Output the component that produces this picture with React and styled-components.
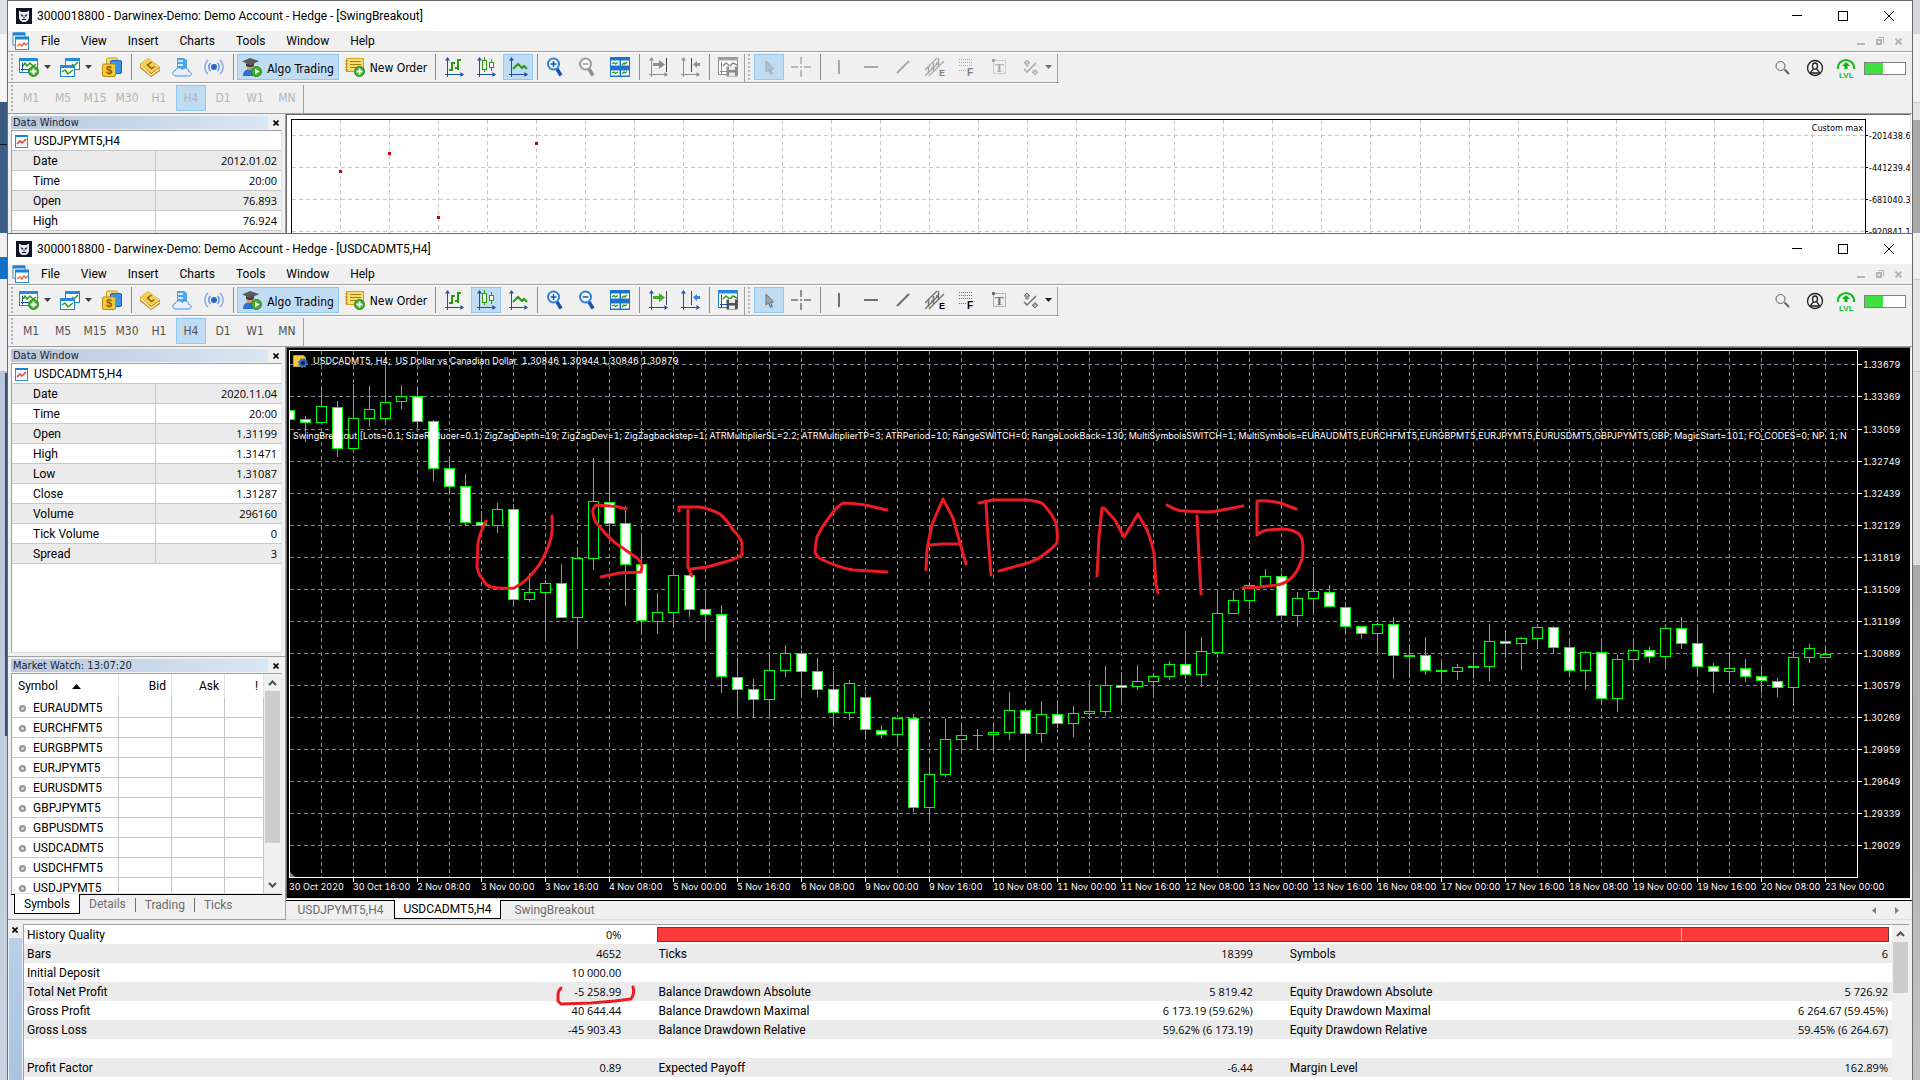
import React from 'react';
import styled, { createGlobalStyle, css } from 'styled-components';

const GlobalStyle = createGlobalStyle`
  * {
    box-sizing: border-box;
  }

  body {
    margin: 0;
    background: #f0f0f0;
    color: #000;
    font: 12px Roboto, sans-serif;
  }

  button {
    border: 0;
    padding: 0;
    background: none;
    color: inherit;
    font: inherit;
  }

  svg {
    display: block;
  }
`;

const LINE = '#a0a0a0';
const CELL_LINE = '#c8c8c8';
const TAHOMA = "'DejaVu Sans Condensed', sans-serif";
const NUMBERS = "'Open Sans', sans-serif";

/* ---------- desktop ---------- */

const Desktop = styled.div`
  display: flex;
  height: 100vh;
  overflow: hidden;
`;

const LeftEdge = styled.div`
  flex: none;
  width: 7px;
  background: linear-gradient(90deg, transparent 5px, #34506e 5px) 0 373px / 7px
      363px no-repeat,
    linear-gradient(
      #dfe3e6 34px,
      #f4f4f4 34px 102px,
      #3a597e 102px 144px,
      #10182a 144px 145px,
      #3d5f87 145px 233px,
      #f0f0f0 233px 257px,
      #1271c4 257px 279px,
      #ececee 279px 371px,
      #b9c5da 371px,
      #c9d3e0
    );
`;

const RightEdge = styled.div`
  flex: none;
  width: 7px;
  background: linear-gradient(
    #d4d8dc 34px,
    #f2f2f2 34px 102px,
    #c4c4c4 102px 103px,
    #e4e4e4 103px 120px,
    #a8a8a8 120px 233px,
    #f0f0f0 233px 279px,
    #cdcdcd 279px 280px,
    #e6e6e8 280px 371px,
    #c8c8c8 371px 372px,
    #dedede 372px 565px,
    #a9a9a9 565px,
    #c2c2c2
  );
`;

const Windows = styled.div`
  display: flex;
  flex: 1;
  flex-direction: column;
  min-width: 0;
`;

const Frame = styled.section`
  display: flex;
  flex: ${({ $back }) => ($back ? '0 0 233px' : '1')};
  flex-direction: column;
  min-height: 0;
  overflow: hidden;
  border: 1px solid #6b6b6b;
  border-bottom: 0;
  background: #f0f0f0;
`;

/* ---------- title and menu ---------- */

const TitleBar = styled.header`
  display: flex;
  flex: none;
  align-items: center;
  height: 30px;
  padding-left: 8px;
  gap: 5px;
  background: #fff;

  h1 {
    flex: 1;
    margin: 0;
    font: inherit;
  }
`;

const CaptionButtons = styled.div`
  display: flex;
`;

const CaptionButton = styled.button`
  display: grid;
  place-items: center;
  width: 46px;
  height: 30px;
`;

const MenuBar = styled.nav`
  display: flex;
  flex: none;
  align-items: center;
  height: 21px;
  padding: 0 4px;
  border-bottom: 1px solid ${LINE};

  a {
    padding: 0 10px 0 11px;
    color: inherit;
    text-decoration: none;
  }
`;

const ChildControls = styled.div`
  display: flex;
  margin-left: auto;

  button {
    display: grid;
    place-items: center;
    width: 19px;
    height: 16px;
  }
`;

/* ---------- toolbars ---------- */

const ToolRow = styled.div`
  display: flex;
  flex: none;
  justify-content: space-between;
  height: 31px;
  border-top: 1px solid #fff;
`;

const ToolBar = styled.div`
  display: flex;
  align-items: flex-start;
  height: 30px;
  padding: 1px 0 0 3px;
  border-bottom: 1px solid ${LINE};
  box-shadow: 0 1px #fff;
`;

const Grip = styled.span`
  width: 2px;
  height: 26px;
  margin-right: ${({ $gap }) => $gap || 1}px;
  background: repeating-linear-gradient(#b4b4b4 0 2px, transparent 2px 4px);
`;

const Divider = styled.span`
  width: 1px;
  height: 26px;
  margin: 0 2px 0 3px;
  background: #8c8c8c;
`;

const BarEnd = styled.span`
  width: 1px;
  height: 28px;
  margin-right: ${({ $gap }) => $gap || 0}px;
  background: ${LINE};
`;

const pressed = css`
  border: 1px solid #90c8f6;
  background: #c0dcf3;
`;

const ToolButton = styled.button`
  display: flex;
  align-items: center;
  justify-content: center;
  width: ${({ $width }) => $width || 30}px;
  height: 26px;
  margin: 0 1px;
  gap: 5px;
  font: 12px ${TAHOMA};
  white-space: nowrap;
  ${({ $pressed }) => $pressed && pressed}
`;

const ToolLabel = styled.span`
  padding-top: ${({ $low }) => ($low ? 3 : 1)}px;
`;

const Periods = styled.div`
  display: flex;
  flex: none;
  height: 31px;
  padding: 2px 0 0 3px;
  border-bottom: 1px solid ${LINE};
  color: ${({ $dim }) => ($dim ? '#b4b4b4' : '#505050')};
`;

const Tray = styled.div`
  display: flex;
  align-items: center;
  gap: 12px;
  padding: 0 6px 0 0;

  svg:first-child {
    margin-right: 3px;
  }
`;

const Battery = styled.div`
  width: 42px;
  height: 13px;
  margin-left: -4px;
  border: 1px solid #808080;
  background: linear-gradient(90deg, #40e040 18px, #fff 18px);
`;

/* ---------- panes ---------- */

const Workspace = styled.main`
  display: flex;
  flex: ${({ $covered }) => ($covered ? '0 0 573px' : '1')};
  min-height: 0;
`;

const SideColumn = styled.aside`
  display: flex;
  flex: none;
  flex-direction: column;
  width: 277px;
  border-bottom: 1px solid ${LINE};
`;

const Pane = styled.section`
  display: flex;
  flex: ${({ $height }) => ($height ? `0 0 ${$height}px` : '1')};
  flex-direction: column;
  min-height: 0;
  padding: 2px 3px 0;
  border-top: ${({ $height }) => ($height ? `1px solid ${LINE}` : 0)};
`;

const PaneHeader = styled.div`
  display: flex;
  flex: none;
  height: 13px;
  margin-bottom: 1px;
  font: 11px/13px ${TAHOMA};
  color: #1c1c2c;

  h2 {
    flex: 1;
    margin: 0;
    padding-left: 2px;
    background: linear-gradient(90deg, #b8c8db, #d9e6f4);
    font: inherit;
  }

  button {
    display: grid;
    place-items: center;
    width: 14px;
    padding-left: 2px;
  }
`;

const ListBox = styled.div`
  display: flex;
  flex: 1;
  min-height: 0;
  margin-bottom: ${({ $gap }) => $gap || 0}px;
  overflow: hidden;
  border: 1px solid #e3e3e3;
  border-top-color: ${LINE};
  border-left-color: ${LINE};
  background: #fff;
`;

const DataTable = styled.table`
  width: 100%;
  height: fit-content;
  border-spacing: 0;
  table-layout: fixed;

  caption {
    height: 19px;
    padding-left: 3px;
    line-height: 20px;
    text-align: left;
  }

  caption > span {
    display: flex;
    align-items: center;
    height: 19px;
    gap: 5px;
  }

  th,
  td {
    height: 20px;
    padding: 2px 4px 0 21px;
    border-top: 1px solid ${CELL_LINE};
    font-weight: 400;
    line-height: 17px;
    text-align: left;
  }

  th {
    width: 143px;
  }

  td {
    padding: 0 4px 0 0;
    border-left: 1px solid ${CELL_LINE};
    font: 11px/19px ${NUMBERS};
    text-align: right;
  }

  tr:nth-child(odd) {
    background: #ebebeb;
  }

  tr:last-child > * {
    border-bottom: 1px solid ${CELL_LINE};
  }
`;

const SymbolTable = styled.table`
  flex: 1;
  height: fit-content;
  border-spacing: 0;
  table-layout: fixed;

  th,
  td {
    height: 20px;
    padding: 2px 5px 0 6px;
    border-right: 1px solid ${CELL_LINE};
    border-bottom: 1px solid ${CELL_LINE};
    font-weight: 400;
    line-height: 17px;
    text-align: right;
  }

  thead th {
    height: 24px;
    padding-top: 0;
    border-bottom: 0;
    border-right-color: #e3e3e3;
  }

  th:first-child {
    text-align: left;
  }
`;

const SymbolCell = styled.span`
  display: flex;
  align-items: center;
  gap: ${({ $gap }) => $gap}px;
`;

const Bullet = styled.i`
  width: 7px;
  height: 7px;
  margin-left: 1px;
  border: 2px solid #959595;
  border-radius: 50%;
  background: #ddd;
`;

const ScrollTrack = styled.div`
  display: flex;
  flex: none;
  flex-direction: column;
  align-items: center;
  width: 17px;
  background: #f0f0f0;

  button {
    display: grid;
    place-items: center;
    width: 100%;
    height: 17px;
  }
`;

const Thumb = styled.div`
  width: 15px;
  height: ${({ $size }) => $size}px;
  margin-bottom: auto;
  background: #cdcdcd;
`;

const PaneTabs = styled.div`
  display: flex;
  flex: none;
  align-items: flex-start;
  height: 25px;
  padding-left: 3px;
  background: linear-gradient(#000 1px, transparent 1px);
`;

const PaneTab = styled.button`
  height: 18px;
  margin-top: 1px;
  padding: 0 9px;
  color: #6d6d6d;

  & + & + & {
    border-left: 1px solid #6d6d6d;
    height: 14px;
    margin-top: 4px;
    line-height: 12px;
  }

  ${({ $active }) =>
    $active &&
    css`
      height: 20px;
      margin-top: 0;
      border: 1px solid #000;
      border-top: 0;
      background: #fff;
      color: #000;
    `}
`;

/* ---------- chart area ---------- */

const ChartColumn = styled.div`
  display: flex;
  flex: 1;
  flex-direction: column;
  min-width: 0;
  border-left: 1px solid ${LINE};
  background: #fff;
`;

const ChartFrame = styled.div`
  flex: 1;
  min-height: 0;
  margin: 0 1px 1px 0;
  overflow: hidden;
  border: 1px solid #e3e3e3;
  border-top-color: #696969;
  border-left-color: #696969;
  background: ${({ $dark }) => ($dark ? '#000' : '#fff')};
`;

const Canvas = styled.svg`
  width: 100%;
  height: 100%;

  text {
    font-variant-numeric: tabular-nums;
    white-space: pre;
  }
`;

const ChartTabs = styled.div`
  display: flex;
  flex: none;
  height: 20px;
  padding-left: 1px;
  border-top: 1px solid #000;
  border-bottom: 1px solid #dcdcdc;
  background: #f0f0f0;
  color: #6d6d6d;
`;

const ChartTab = styled.button`
  width: 107px;

  ${({ $active }) =>
    $active &&
    css`
      margin-top: -1px;
      border: 1px solid #000;
      border-top: 0;
      background: #fff;
      color: #000;
    `}
`;

const TabArrows = styled.div`
  display: flex;
  gap: 19px;
  align-items: center;
  margin-left: auto;
  padding-right: 13px;
`;

/* ---------- report ---------- */

const Report = styled.section`
  position: relative;
  display: flex;
  flex: none;
  height: 160px;
  padding: 4px 3px 0 1px;
  overflow: hidden;
`;

const ReportHandle = styled.div`
  width: 13px;
  margin-right: 1px;
  background: linear-gradient(transparent 14px, #b9cfeb 14px, #a9c3e0);

  button {
    display: grid;
    place-items: center;
    width: 12px;
    height: 11px;
  }
`;

const ReportBody = styled.div`
  display: flex;
  flex: 1;
  align-items: stretch;
  border: solid ${LINE};
  border-width: 1px 0 0 1px;
  background: #fff;
`;

const ReportTable = styled.table`
  flex: 1;
  height: fit-content;
  border-spacing: 0;
  table-layout: fixed;

  th,
  td {
    height: 19px;
    padding: 2px 0 0 3px;
    font-weight: 400;
    line-height: 17px;
    text-align: left;
  }

  td {
    padding: 0 34px 0 3px;
    font: 11px/19px ${NUMBERS};
    text-align: right;
  }

  td:last-child {
    padding-right: 4px;
  }

  tr:nth-child(even) {
    background: #ebebeb;
  }
`;

const QualityBar = styled.div`
  height: 15px;
  margin: 0 -1px;
  border: 1px solid #6a3a3a;
  background: linear-gradient(#ffb0b0, #ffb0b0) 83.2% 0 / 1px 100% no-repeat #ff3a3a;
`;

const Ink = styled.svg`
  position: absolute;
  inset: 0;
  width: 100%;
  height: 100%;
  pointer-events: none;
`;

/* ---------- icons ---------- */

const Icon = ({ size = 20, children }) => (
  <svg width={size} height={size} viewBox={`0 0 ${size} ${size}`} fill="none">
    {children}
  </svg>
);

const Plus = () => (
  <g>
    <circle cx="14.5" cy="14.5" r="5" fill="#3fae2a" stroke="#2b8a1c" />
    <path d="M14.5 11.5v6M11.5 14.5h6" stroke="#fff" strokeWidth="2" />
  </g>
);

const OwlIcon = () => (
  <Icon size={16}>
    <rect width="16" height="16" fill="#0b1324" />
    <path d="M3 2.500l2.500 1.500h5L13 2.500v6.500c0 3-2 5-5 5s-5-2-5-5z" fill="#e8edf2" />
    <path d="M4.500 6l3 1.500-1.500 1.500zM11.500 6l-3 1.500L10 9z" fill="#0b1324" />
    <path d="M6 11.500h4M8 8.500v2" stroke="#0b1324" />
  </Icon>
);

const ChartStackIcon = () => (
  <Icon size={18}>
    <rect x="1" y="1" width="12" height="12" fill="#fff" stroke="#2a8fd8" />
    <path d="M1 2h12" stroke="#1b82d1" strokeWidth="3" />
    <rect x="3.500" y="5.500" width="13" height="12" fill="#fff" stroke="#2a8fd8" />
    <path d="M3 6h14" stroke="#1b82d1" strokeWidth="3" />
    <path d="M5 14l3-2 2 2 2-3 2 2 2-2" stroke="#f0663a" strokeWidth="1.500" />
  </Icon>
);

const SheetIcon = () => (
  <Icon size={14}>
    <rect x=".5" y="1.500" width="12" height="12" fill="#fff" stroke="#2a8fd8" />
    <path d="M0 2h13" stroke="#1b82d1" strokeWidth="2" />
    <path d="M3 5v7M6 5v7M9 5v7" stroke="#cfe0ee" />
    <path d="M2 10l3-3 2 2 4-4" stroke="#e03a3a" strokeWidth="1.500" />
  </Icon>
);

const NewChartIcon = () => (
  <Icon>
    <rect x=".5" y="1.500" width="18" height="14" fill="#fff" stroke="#1d7fd0" />
    <path d="M0 2.500h19" stroke="#1d8be0" strokeWidth="3" />
    <path d="M3.500 5.500v9M2 12.500h13" stroke="#1b4fb0" />
    <path d="M4 9l2-3 2 3 3-3 3 3 3-2" stroke="#2e9a10" strokeWidth="1.500" />
    <Plus />
  </Icon>
);

const ProfilesIcon = () => (
  <Icon>
    <rect x="5.500" y="1.500" width="14" height="11" fill="#fff" stroke="#1d7fd0" />
    <path d="M5 2.500h15" stroke="#1d8be0" strokeWidth="3" />
    <path d="M12 7l2 2 4-4" stroke="#2e9a10" strokeWidth="1.500" />
    <rect x=".5" y="8.500" width="14" height="11" fill="#fff" stroke="#1d7fd0" />
    <path d="M0 9.500h15" stroke="#1d8be0" strokeWidth="3" />
    <path d="M2 15l3-2 3 4 5-4" stroke="#2e9a10" strokeWidth="1.500" />
  </Icon>
);

const SymbolsIcon = () => (
  <Icon>
    <rect x="4.500" y="1" width="11" height="13" rx="1.500" fill="#f7dc7a" stroke="#c99a1c" />
    <rect x="8.500" y="3.500" width="11" height="13" rx="1.500" fill="#3a94e6" stroke="#1560b0" />
    <rect x=".5" y="7" width="13" height="12.500" rx="1.500" fill="#f6c93c" stroke="#b98a10" />
    <text x="4" y="17" fontSize="11" fontWeight="700" fill="#8a5d00" fontFamily="Liberation Sans, sans-serif">$</text>
  </Icon>
);

const BookIcon = () => (
  <Icon>
    <path d="M0 7L8 1l12 9v4l-9 6L0 11z" fill="#b8830f" />
    <path d="M0 7L8 1l12 9-9 6z" fill="#f3cf58" />
    <path d="M.5 8.500L11 18l8.500-6" stroke="#fff2c0" strokeWidth="1.500" />
    <path d="M11.500 5l-4 3 4 3.500 3-2" stroke="#8a5d00" strokeWidth="1.500" />
  </Icon>
);

const CloudIcon = () => (
  <Icon>
    <path d="M5 1h7l3 2v12H5z" fill="#49a6ea" />
    <path d="M6 3h5v2H6zM6 7h5v2H6z" fill="#cfe8fb" />
    <path
      d="M4 19c-4 0-4.500-5-.5-5.500C4 10 9 10 10 12.500c3-3 7-1 6.500 2 4 .5 3.500 4.500 0 4.500z"
      fill="#e3effa"
      stroke="#4f8fce"
    />
  </Icon>
);

const SignalIcon = () => (
  <Icon>
    <circle cx="10" cy="10" r="3" fill="#2c64c8" />
    <path d="M6.500 6a5.500 5.500 0 000 8M13.500 6a5.500 5.500 0 010 8" stroke="#5f92de" strokeWidth="1.500" />
    <path d="M4 3a9.500 9.500 0 000 14M16 3a9.500 9.500 0 010 14" stroke="#86adE6" strokeWidth="1.500" />
  </Icon>
);

const AlgoIcon = () => (
  <Icon>
    <path d="M1 19c0-5 3-7 7-7s7 2 7 7z" fill="#2f6fd0" />
    <path d="M4.500 7v3c0 4 7 4 7 0V7z" fill="#e0a060" />
    <path d="M0 4.500L8 1l9 3-8 4z" fill="#5a5a5a" />
    <path d="M4 6v3c3 1.500 6 1.500 8 0V6L9 8z" fill="#3c3c3c" />
    <circle cx="14.500" cy="14.500" r="5" fill="#3fae2a" stroke="#2b8a1c" />
    <path d="M13 11.500l4.500 3-4.500 3z" fill="#fff" />
  </Icon>
);

const OrderIcon = () => (
  <Icon>
    <rect x="1.500" y="1.500" width="17" height="13" fill="#f8dc78" stroke="#d0a020" />
    <path d="M5 4.500h11M5 7.500h11M5 10.500h9" stroke="#a87c10" />
    <path d="M0 4h3M0 7h3M0 10h3M0 13h3" stroke="#b88a18" />
    <Plus />
  </Icon>
);

const AxisIcon = ({ children, color = '#1b4fb0' }) => (
  <Icon>
    <path d="M3.500 2v18M1 17.500h17" stroke={color} />
    <path d="M3.500 0L6 3.500H1zM20 17.500L16.500 15v5z" fill={color} />
    {children}
  </Icon>
);

const BarsIcon = () => (
  <AxisIcon>
    <path d="M8 5v9M5 13h3M8 6h3M14 2v11M11 11h3M14 3h3" stroke="#2e9a10" strokeWidth="2" />
  </AxisIcon>
);

const CandlesIcon = () => (
  <AxisIcon>
    <path d="M8.500 0v15M15.500 2v12" stroke="#2e9a10" />
    <rect x="6.500" y="3.500" width="4" height="9" fill="#fff" stroke="#2e9a10" />
    <rect x="13.500" y="5.500" width="4" height="5" fill="#fff" stroke="#2e9a10" />
  </AxisIcon>
);

const LineIcon = () => (
  <AxisIcon>
    <path d="M5 12l5-5 4 4 2-2 3 3" stroke="#2e9a10" strokeWidth="2" />
  </AxisIcon>
);

const ZoomIcon = ({ dim, minus }) => (
  <Icon>
    <path d="M11 12l4 6.500" stroke={dim ? '#909090' : '#1a50b4'} strokeWidth="3.500" />
    <circle cx="7.500" cy="7" r="5.500" fill="#fff" stroke={dim ? '#9a9a9a' : '#2a80d8'} strokeWidth="2" />
    <path d={minus ? 'M4.500 7h6' : 'M4.500 7h6M7.500 4v6'} stroke={dim ? '#9a9a9a' : '#1a50b4'} strokeWidth="1.500" />
  </Icon>
);

const TileIcon = () => (
  <Icon>
    <rect width="20" height="20" fill="#1c72cc" />
    <path d="M1 3.500h8.500v5H1zM11 3.500h8v5h-8zM1 13.500h8.500v5H1zM11 13.500h8v5h-8z" fill="#fff" />
    <path d="M2 7l2-1.500 1.500 1.500L8 5.500M12 8l2-2 1 1 2-2M2 16l2-1 1.500 1.500L8 15M12 17l2-2 1 1 2-1.500" stroke="#2e9a10" strokeWidth="1.300" />
  </Icon>
);

const ShiftEndIcon = ({ dim }) => (
  <AxisIcon color={dim ? '#909090' : '#1b4fb0'}>
    <path d="M18.500 1v14" stroke="#444" />
    <path d="M5 6h6V3l6 4.500-6 4.500V9H5z" fill={dim ? '#909090' : '#3fae2a'} />
  </AxisIcon>
);

const ShiftIcon = ({ dim }) => (
  <AxisIcon color={dim ? '#909090' : '#1b4fb0'}>
    <path d="M11.500 1v14" stroke="#444" />
    <path d="M20 6h-3V4l-4 3.500 4 3.500V9h3z" fill={dim ? '#909090' : '#3a80e0'} />
  </AxisIcon>
);

const SaveIcon = ({ dim }) => (
  <Icon>
    <rect x=".5" y=".5" width="19" height="17" fill="#fff" stroke={dim ? '#8c8c8c' : '#1d7fd0'} />
    <path d="M0 2h20" stroke={dim ? '#a0a0a0' : '#1d8be0'} strokeWidth="3" />
    <path d="M3.500 5v12M2 14.500h7" stroke={dim ? '#8c8c8c' : '#1b4fb0'} />
    <path d="M5 9l3-3 4 3 3-3 4 2" stroke={dim ? '#8c8c8c' : '#2e9a10'} strokeWidth="1.500" />
    <path d="M8.500 9.500h11v10h-11z" fill={dim ? '#8c8c8c' : '#4a4f58'} />
    <path d="M11 9h6v4h-6zM11 15.500h6V19h-6z" fill="#e8e8e8" />
  </Icon>
);

const CursorIcon = ({ c }) => (
  <Icon>
    <path d="M7 4v11l2.500-2 2 4.500 2-1-2-4 3-.5z" fill={c} fillOpacity=".5" stroke={c} />
  </Icon>
);

const CrossIcon = ({ c }) => (
  <Icon>
    <path d="M0 10h7M13 10h7M10 0v7M10 13v7M9 10h2" stroke={c} strokeWidth="1.500" />
  </Icon>
);

const EquidistantIcon = ({ c, letter }) => (
  <Icon>
    <path d="M0 19L13 6M4 19L19 4M0 13L12 1" stroke={c} strokeWidth="1.300" />
    <path d="M3.500 9v8M8.500 6v8M13.500 1v9M6 11h3M11 6h3" stroke={c} strokeWidth="1.500" />
    <text x="14" y="19" fontSize="9" fontWeight="700" fill={letter} fontFamily="Liberation Sans, sans-serif">E</text>
  </Icon>
);

const FiboIcon = ({ c, letter }) => (
  <Icon>
    <path d="M2 2.500h13M2 5.500h13M2 8.500h13M2 13.500h8" stroke={c} strokeDasharray="1 1" />
    <text x="10" y="19" fontSize="10" fontWeight="700" fill={letter} fontFamily="Liberation Sans, sans-serif">F</text>
  </Icon>
);

const TextIcon = ({ c }) => (
  <Icon>
    <rect x="4.500" y="3.500" width="12" height="13" stroke={c} strokeDasharray="1 1" />
    <path d="M3 2h3v3H3z" fill={c} />
    <text x="6" y="15" fontSize="13" fontWeight="700" fill={c} fontFamily="Liberation Serif, serif">T</text>
  </Icon>
);

const ShapesIcon = ({ c }) => (
  <Icon>
    <path d="M7 3l3 3h-2v3H6V6H4zM15 18l-3-3h2v-2h2v2h2z" fill={c} fillOpacity=".4" stroke={c} />
    <path d="M4 12l3 3 9-9" stroke={c} strokeWidth="1.500" />
  </Icon>
);

const StrokeIcon = ({ c, d }) => (
  <Icon>
    <path d={d} stroke={c} strokeWidth="2" />
  </Icon>
);

const SearchIcon = () => (
  <Icon size={16}>
    <path d="M9.500 9.500l4.500 4.500" stroke="#606060" strokeWidth="2" />
    <circle cx="5.500" cy="6" r="4.500" stroke="#606060" />
  </Icon>
);

const UserIcon = () => (
  <Icon size={18}>
    <circle cx="9" cy="9" r="7.500" stroke="#202020" strokeWidth="1.300" />
    <path d="M6.500 7c0-4 5-4 5 0s-5 4.500-5 0M4.500 14c1-3 2-2 2.500-4M13.500 14c-1-3-2-2-2.500-4M5 14h8" stroke="#202020" strokeWidth="1.300" />
  </Icon>
);

const LevelIcon = () => (
  <Icon>
    <path d="M2 11C1 -1 19 -1 18 11" stroke="#10c010" strokeWidth="2" />
    <path d="M10 4l4 4h-2.500v3h-3V8H6z" fill="#10b010" />
    <text x="3" y="20" fontSize="8" fontWeight="700" fill="#10c010" fontFamily="Liberation Sans, sans-serif">LVL</text>
  </Icon>
);

const Caret = ({ color = '#404040' }) => (
  <svg width="7" height="4" fill={color}>
    <path d="M0 0h7L3.500 4z" />
  </svg>
);

const CloseMark = () => (
  <svg width="6" height="6" stroke="#000" strokeWidth="1.600">
    <path d="M.5 .5l5 5M5.500 .5l-5 5" />
  </svg>
);

const Chevron = ({ down }) => (
  <svg width="9" height="6" fill="none" stroke="#505050" strokeWidth="2">
    <path d={down ? 'M1 1l3.500 3.500L8 1' : 'M1 5l3.500-3.500L8 5'} />
  </svg>
);

/* ---------- candle chart ---------- */

// high, open/close top, open/close bottom, low, bearish
const candles = [
  [410, 410, 419, 419, 1], [416, 419, 422, 441, 1], [387, 406, 422, 423, 0],
  [401, 407, 448, 456, 1], [384, 418, 448, 448, 0], [386, 409, 418, 426, 0],
  [364, 402, 418, 421, 0], [385, 396, 401, 408, 0], [388, 396, 421, 427, 1],
  [420, 421, 468, 480, 1], [456, 468, 486, 493, 1], [474, 486, 522, 525, 1],
  [511, 522, 525, 525, 1], [503, 509, 525, 532, 0], [504, 509, 599, 603, 1],
  [573, 592, 599, 601, 0], [580, 583, 592, 637, 0], [564, 583, 617, 617, 1],
  [548, 558, 617, 646, 0], [458, 501, 558, 569, 0], [433, 502, 523, 532, 1],
  [506, 523, 564, 605, 1], [537, 564, 620, 631, 1], [593, 612, 621, 633, 0],
  [571, 575, 612, 623, 0], [573, 575, 609, 616, 1], [593, 609, 614, 639, 1],
  [605, 614, 676, 692, 1], [657, 677, 689, 716, 1], [679, 689, 699, 717, 1],
  [655, 670, 699, 715, 0], [645, 653, 670, 676, 0], [650, 653, 671, 695, 1],
  [658, 671, 689, 696, 1], [671, 689, 712, 726, 1], [680, 683, 712, 719, 0],
  [692, 697, 729, 737, 1], [725, 730, 734, 738, 1], [718, 718, 734, 742, 0],
  [714, 718, 807, 811, 1], [757, 774, 807, 820, 0], [719, 739, 774, 776, 0],
  [724, 735, 739, 749, 0], [729, 735, 735, 748, 0], [723, 732, 734, 748, 0],
  [692, 710, 732, 739, 0], [709, 710, 733, 761, 1], [701, 714, 733, 742, 0],
  [700, 714, 723, 727, 1], [706, 713, 723, 736, 0], [684, 711, 713, 718, 0],
  [666, 685, 711, 715, 0], [672, 685, 687, 701, 1], [665, 681, 686, 689, 0],
  [673, 676, 681, 693, 0], [661, 664, 676, 679, 0], [635, 664, 674, 678, 1],
  [637, 651, 674, 686, 0], [590, 613, 652, 657, 0], [591, 600, 613, 613, 0],
  [583, 585, 600, 608, 0], [569, 576, 585, 585, 0], [573, 576, 615, 616, 1],
  [592, 598, 615, 626, 0], [567, 591, 598, 614, 0], [585, 592, 606, 606, 1],
  [602, 607, 626, 633, 1], [626, 626, 633, 638, 1], [623, 624, 633, 652, 0],
  [617, 624, 655, 678, 1], [644, 655, 656, 677, 1], [637, 655, 670, 674, 1],
  [663, 670, 671, 679, 1], [664, 667, 671, 679, 0], [652, 666, 667, 678, 0],
  [624, 641, 666, 680, 0], [630, 641, 643, 657, 1], [637, 638, 643, 669, 0],
  [624, 627, 638, 648, 0], [626, 627, 647, 653, 1], [642, 647, 670, 676, 1],
  [651, 652, 670, 688, 0], [642, 652, 698, 704, 1], [655, 659, 698, 711, 0],
  [642, 650, 659, 670, 0], [647, 650, 656, 662, 1], [624, 628, 656, 665, 0],
  [617, 628, 643, 648, 1], [628, 643, 666, 674, 1], [663, 666, 671, 692, 1],
  [653, 668, 671, 682, 0], [659, 668, 676, 681, 1], [665, 676, 680, 692, 1],
  [678, 681, 687, 696, 1], [651, 657, 687, 705, 0], [644, 648, 657, 662, 0],
  [647, 654, 657, 657, 0],
];

const priceRows = [364, 396, 429, 461, 493, 525, 557, 589, 621, 653, 685, 717, 749, 781, 813, 845];

const dates = [
  '30 Oct 2020', '30 Oct 16:00', '2 Nov 08:00', '3 Nov 00:00', '3 Nov 16:00',
  '4 Nov 08:00', '5 Nov 00:00', '5 Nov 16:00', '6 Nov 08:00', '9 Nov 00:00',
  '9 Nov 16:00', '10 Nov 08:00', '11 Nov 00:00', '11 Nov 16:00', '12 Nov 08:00',
  '13 Nov 00:00', '13 Nov 16:00', '16 Nov 08:00', '17 Nov 00:00', '17 Nov 16:00',
  '18 Nov 08:00', '19 Nov 00:00', '19 Nov 16:00', '20 Nov 08:00', '23 Nov 00:00',
];

const expertLine =
  'SwingBreakout [Lots=0.1; SizeReducer=0.1; ZigZagDepth=19; ZigZagDev=1; ZigZagbackstep=1; ATRMultiplierSL=2.2; ATRMultiplierTP=3; ATRPeriod=10; RangeSWITCH=0; RangeLookBack=130; MultiSymbolsSWITCH=1; MultiSymbols=EURAUDMT5,EURCHFMT5,EURGBPMT5,EURJPYMT5,EURUSDMT5,GBPJPYMT5,GBP; MagicStart=101; FO_CODES=0; NP. 1; N';

// freehand marker strokes drawn over the chart
const strokes = [
  'M486 521Q480 532 478 543L477 567Q479 576 482 578Q486 586 491 587Q503 589 514 588Q522 584 528 578Q538 568 542 560Q549 547 550 541Q553 534 552 516',
  'M626 509Q618 506 610 506L596 505Q592 509 593 513Q594 521 598 525Q606 535 614 542L637 558Q642 563 642 567L641 572L619 573L601 577',
  'M679 511V507H700Q713 510 720 514Q728 521 733 530Q741 538 742 543V555L732 560L707 567L691 569',
  'M688 510V567L692 576',
  'M887 510L865 505Q852 503 843 503Q837 507 834 511Q822 526 817 537Q815 546 815 553L819 558Q836 567 853 570L887 572',
  'M926 570L927 550Q930 532 933 522L943 499L953 518L960 543L966 564',
  'M929 545L943 544H960',
  'M979 503L993 500H1026Q1039 501 1043 504Q1053 515 1056 523Q1058 533 1057 543L1051 549Q1038 560 1028 563L999 571',
  'M986 503L988 537L991 575',
  'M1097 576L1099 537L1102 508H1104L1115 520L1124 537L1138 514L1147 530Q1152 542 1154 553L1156 585L1158 593',
  'M1167 505Q1177 511 1184 511L1206 512Q1214 512 1222 510L1243 506',
  'M1197 516L1199 557L1201 594',
  'M1296 509L1283 504Q1272 500 1257 501V535Q1261 531 1268 530L1283 529Q1299 530 1302 539Q1304 549 1302 559Q1297 574 1290 579Q1284 584 1277 585L1260 587L1243 588',
];

const range = (n) => Array.from({ length: n }, (_, i) => i);

const PriceChart = () => (
  <Canvas>
    <defs>
      <clipPath id="plot">
        <rect x="290" y="351" width="1567" height="526" />
      </clipPath>
    </defs>
    <g transform="translate(-287 -348)" fontFamily="Inter, sans-serif" fontSize="9" fill="#fff">
      <g stroke="#778899" strokeDasharray="4 3" shapeRendering="crispEdges">
        {range(48).map((i) => (
          <path key={i} d={`M${321.5 + i * 32} 351V877`} />
        ))}
        {priceRows.map((y) => (
          <path key={y} d={`M290 ${y + 0.5}H1857`} />
        ))}
      </g>
      <g clipPath="url(#plot)" stroke="#00ff00" shapeRendering="crispEdges">
        {candles.map(([high, top, bottom, low, bearish], i) => (
          <g key={i}>
            <path d={`M${289.5 + i * 16} ${high}V${low + 1}`} />
            <path
              d={`M${284.5 + i * 16} ${top + 0.5}h10v${bottom - top}h-10z`}
              fill={bearish ? '#fff' : '#000'}
            />
          </g>
        ))}
      </g>
      <text x="293" y="439" clipPath="url(#plot)">{expertLine}</text>
      <path d="M289.500 877V350.500H1857.500V877.500H289" stroke="#fff" fill="none" shapeRendering="crispEdges" />
      <path d="M290 872v5h5z" fill="#778899" />
      {dates.map((date, i) => (
        <g key={date}>
          {i > 0 && <path d={`M${289.5 + i * 64} 878v4`} stroke="#fff" />}
          <text x={289 + i * 64} y="890">{date}</text>
        </g>
      ))}
      {priceRows.map((y, i) => (
        <g key={y}>
          <path d={`M1858 ${y + 0.5}h4`} stroke="#fff" />
          <text x="1863" y={y + 4}>{(1.33679 - i * 0.0031).toFixed(5)}</text>
        </g>
      ))}
      <path d="M293.500 355.500h10l2 2v9h-12z" fill="#f6c93c" stroke="#c99a1c" />
      <circle cx="303" cy="363" r="3" stroke="#2a6ad0" strokeWidth="2" fill="#123" />
      <circle cx="303" cy="363" r="4.500" stroke="#2a6ad0" strokeDasharray="2 1.500" fill="none" />
      <text x="313" y="364">USDCADMT5, H4;  US Dollar vs Canadian Dollar  1.30846 1.30944 1.30846 1.30879</text>
      <g fill="none" stroke="#ed1c24" strokeWidth="3" strokeLinecap="round" strokeLinejoin="round">
        {strokes.map((d) => (
          <path key={d} d={d} />
        ))}
      </g>
    </g>
  </Canvas>
);

const optimisationRows = [
  [20, '-201438.6'],
  [52, '-441239.4'],
  [84, '-681040.3'],
  [116, '-920841.1'],
];

const OptimisationChart = () => (
  <Canvas fontFamily="DejaVu Sans Condensed, sans-serif" fontSize="9">
    <g stroke="#c8c8c8" strokeDasharray="4 3" shapeRendering="crispEdges">
      {range(31).map((i) => (
        <path key={i} d={`M${Math.round(53 + i * 49.07) + 0.5} 5V120`} />
      ))}
      {optimisationRows.map(([y]) => (
        <path key={y} d={`M5 ${y + 0.5}H1578`} />
      ))}
    </g>
    <path d="M4.500 120V4.500H1578.500V120" stroke="#000" fill="none" shapeRendering="crispEdges" />
    <rect x="1523" y="6" width="54" height="13" fill="#fff" />
    <text x="1576" y="16" textAnchor="end">Custom max</text>
    {optimisationRows.map(([y, label]) => (
      <g key={y}>
        <path d={`M1579 ${y + 0.5}h2`} stroke="#000" />
        <text x="1582" y={y + 4}>{label}</text>
      </g>
    ))}
    {[[53, 56], [102, 38], [151, 102], [249, 28]].map(([x, y]) => (
      <rect key={x} x={x - 1} y={y - 1} width="3" height="3" fill="#c80000" />
    ))}
  </Canvas>
);

/* ---------- window parts ---------- */

const menus = ['File', 'View', 'Insert', 'Charts', 'Tools', 'Window', 'Help'];
const periods = ['M1', 'M5', 'M15', 'M30', 'H1', 'H4', 'D1', 'W1', 'MN'];

const WindowTop = ({ title, chartType, dim }) => {
  const tool = dim ? '#a8a8a8' : '#707070';
  const letter = dim ? '#808080' : '#000';
  return (
    <>
      <TitleBar>
        <OwlIcon />
        <h1>3000018800 - Darwinex-Demo: Demo Account - Hedge - [{title}]</h1>
        <CaptionButtons>
          <CaptionButton aria-label="Minimize">
            <svg width="10" height="10" stroke="#000"><path d="M0 4.500h10" /></svg>
          </CaptionButton>
          <CaptionButton aria-label="Maximize">
            <svg width="10" height="10" stroke="#000" fill="none"><rect x=".5" y=".5" width="9" height="9" /></svg>
          </CaptionButton>
          <CaptionButton aria-label="Close">
            <svg width="10" height="10" stroke="#000"><path d="M0 0l10 10M10 0L0 10" /></svg>
          </CaptionButton>
        </CaptionButtons>
      </TitleBar>
      <MenuBar>
        <ChartStackIcon />
        {menus.map((menu) => (
          <a key={menu} href={`#${menu}`}>{menu}</a>
        ))}
        <ChildControls>
          <button aria-label="Minimize chart">
            <svg width="8" height="8" fill="#b4b4b4"><path d="M0 6h8v2H0z" /></svg>
          </button>
          <button aria-label="Restore chart">
            <svg width="8" height="8" fill="none" stroke="#b4b4b4"><path d="M2 .5h5.500V6" /><rect x="1" y="3" width="4" height="4" strokeWidth="2" /></svg>
          </button>
          <button aria-label="Close chart">
            <svg width="7" height="7" stroke="#b4b4b4" strokeWidth="2"><path d="M.5 .5l6 6M6.500 .5l-6 6" /></svg>
          </button>
        </ChildControls>
      </MenuBar>
      <ToolRow>
        <ToolBar>
          <Grip />
          <ToolButton $width={39} aria-label="New chart"><NewChartIcon /><Caret /></ToolButton>
          <ToolButton $width={39} aria-label="Profiles"><ProfilesIcon /><Caret /></ToolButton>
          <ToolButton aria-label="Symbols"><SymbolsIcon /></ToolButton>
          <Divider />
          <ToolButton aria-label="Market"><BookIcon /></ToolButton>
          <ToolButton aria-label="Cloud"><CloudIcon /></ToolButton>
          <ToolButton aria-label="Signals"><SignalIcon /></ToolButton>
          <Divider />
          <ToolButton $pressed $width={102}><AlgoIcon /><ToolLabel $low>Algo Trading</ToolLabel></ToolButton>
          <ToolButton $width={90}><OrderIcon /><ToolLabel>New Order</ToolLabel></ToolButton>
          <Divider />
          <ToolButton $pressed={chartType === 'bars'} aria-label="Bars"><BarsIcon /></ToolButton>
          <ToolButton $pressed={chartType === 'candles'} aria-label="Candles"><CandlesIcon /></ToolButton>
          <ToolButton $pressed={chartType === 'line'} aria-label="Line"><LineIcon /></ToolButton>
          <Divider />
          <ToolButton aria-label="Zoom in"><ZoomIcon /></ToolButton>
          <ToolButton aria-label="Zoom out"><ZoomIcon minus dim={dim} /></ToolButton>
          <ToolButton aria-label="Tile windows"><TileIcon /></ToolButton>
          <Divider />
          <ToolButton aria-label="Scroll to end"><ShiftEndIcon dim={dim} /></ToolButton>
          <ToolButton aria-label="Chart shift"><ShiftIcon dim={dim} /></ToolButton>
          <Divider />
          <ToolButton aria-label="Templates"><SaveIcon dim={dim} /></ToolButton>
          <BarEnd $gap={3} />
          <Grip $gap={3} />
          <ToolButton $pressed aria-label="Cursor"><CursorIcon c={tool} /></ToolButton>
          <ToolButton aria-label="Crosshair"><CrossIcon c={tool} /></ToolButton>
          <Divider />
          <ToolButton aria-label="Vertical line"><StrokeIcon c={tool} d="M10 3v14" /></ToolButton>
          <ToolButton aria-label="Horizontal line"><StrokeIcon c={tool} d="M3 10h14" /></ToolButton>
          <ToolButton aria-label="Trendline"><StrokeIcon c={tool} d="M4 16L16 4" /></ToolButton>
          <ToolButton aria-label="Channel"><EquidistantIcon c={tool} letter={letter} /></ToolButton>
          <ToolButton aria-label="Fibonacci"><FiboIcon c={tool} letter={letter} /></ToolButton>
          <ToolButton aria-label="Text"><TextIcon c={tool} /></ToolButton>
          <ToolButton $width={40} aria-label="Objects"><ShapesIcon c={tool} /><Caret color={dim ? '#707070' : '#202020'} /></ToolButton>
          <BarEnd $gap={1} />
        </ToolBar>
        <Tray>
          <SearchIcon />
          <UserIcon />
          <LevelIcon />
          <Battery />
        </Tray>
      </ToolRow>
      <Periods $dim={dim}>
        <Grip $gap={2} />
        {periods.map((period) => (
          <ToolButton key={period} $pressed={period === 'H4'}>{period}</ToolButton>
        ))}
        <BarEnd />
      </Periods>
    </>
  );
};

const DataPane = ({ symbol, rows }) => (
  <Pane>
    <PaneHeader>
      <h2>Data Window</h2>
      <button aria-label="Close Data Window"><CloseMark /></button>
    </PaneHeader>
    <ListBox $gap={3}>
      <DataTable>
        <caption><span><SheetIcon />{symbol}</span></caption>
        <tbody>
          {rows.map(([label, value]) => (
            <tr key={label}>
              <th scope="row">{label}</th>
              <td>{value}</td>
            </tr>
          ))}
        </tbody>
      </DataTable>
    </ListBox>
  </Pane>
);

const symbols = ['EURAUDMT5', 'EURCHFMT5', 'EURGBPMT5', 'EURJPYMT5', 'EURUSDMT5', 'GBPJPYMT5', 'GBPUSDMT5', 'USDCADMT5', 'USDCHFMT5', 'USDJPYMT5'];

const MarketWatch = () => (
  <Pane $height={263}>
    <PaneHeader>
      <h2>Market Watch: 13:07:20</h2>
      <button aria-label="Close Market Watch"><CloseMark /></button>
    </PaneHeader>
    <ListBox>
      <SymbolTable>
        <colgroup>
          <col />
          <col width="53" />
          <col width="53" />
          <col width="39" />
        </colgroup>
        <thead>
          <tr>
            <th>
              <SymbolCell $gap={14}>
                Symbol
                <svg width="9" height="5"><path d="M0 5h9L4.500 0z" /></svg>
              </SymbolCell>
            </th>
            <th>Bid</th>
            <th>Ask</th>
            <th>!</th>
          </tr>
        </thead>
        <tbody>
          {symbols.map((symbol) => (
            <tr key={symbol}>
              <th scope="row"><SymbolCell $gap={7}><Bullet />{symbol}</SymbolCell></th>
              <td />
              <td />
              <td />
            </tr>
          ))}
        </tbody>
      </SymbolTable>
      <ScrollTrack>
        <button aria-label="Scroll up"><Chevron /></button>
        <Thumb $size={152} />
        <button aria-label="Scroll down"><Chevron down /></button>
      </ScrollTrack>
    </ListBox>
    <PaneTabs>
      <PaneTab $active>Symbols</PaneTab>
      <PaneTab>Details</PaneTab>
      <PaneTab>Trading</PaneTab>
      <PaneTab>Ticks</PaneTab>
    </PaneTabs>
  </Pane>
);

const reportRows = [
  ['Bars', '4652', 'Ticks', '18399', 'Symbols', '6'],
  ['Initial Deposit', '10 000.00', '', '', '', ''],
  ['Total Net Profit', '-5 258.99', 'Balance Drawdown Absolute', '5 819.42', 'Equity Drawdown Absolute', '5 726.92'],
  ['Gross Profit', '40 644.44', 'Balance Drawdown Maximal', '6 173.19 (59.62%)', 'Equity Drawdown Maximal', '6 264.67 (59.45%)'],
  ['Gross Loss', '-45 903.43', 'Balance Drawdown Relative', '59.62% (6 173.19)', 'Equity Drawdown Relative', '59.45% (6 264.67)'],
  ['', '', '', '', '', ''],
  ['Profit Factor', '0.89', 'Expected Payoff', '-6.44', 'Margin Level', '162.89%'],
  ['', '', '', '', '', ''],
];

const TesterReport = () => (
  <Report>
    <ReportHandle>
      <button aria-label="Close report"><CloseMark /></button>
    </ReportHandle>
    <ReportBody>
      <ReportTable>
        <colgroup>
          <col width="16.9%" />
          <col width="16.9%" />
          <col width="16.9%" />
          <col width="16.9%" />
          <col width="16.2%" />
          <col width="16.2%" />
        </colgroup>
        <tbody>
          <tr>
            <th scope="row">History Quality</th>
            <td>0%</td>
            <td colSpan="4"><QualityBar /></td>
          </tr>
          {reportRows.map((row, i) => (
            <tr key={i}>
              {row.map((cell, j) => (j % 2 ? <td key={j}>{cell}</td> : <th key={j}>{cell}</th>))}
            </tr>
          ))}
        </tbody>
      </ReportTable>
      <ScrollTrack>
        <button aria-label="Scroll report up"><Chevron /></button>
        <Thumb $size={51} />
      </ScrollTrack>
    </ReportBody>
    <Ink fill="none" stroke="#ed1c24" strokeWidth="3" strokeLinecap="round" strokeLinejoin="round">
      <path d="M553 68Q550 71 550 75V81L553 84L583 83L607 81L623 79Q627 73 625 67" />
    </Ink>
  </Report>
);

const backRows = [
  ['Date', '2012.01.02'],
  ['Time', '20:00'],
  ['Open', '76.893'],
  ['High', '76.924'],
  ['', ''],
];

const frontRows = [
  ['Date', '2020.11.04'],
  ['Time', '20:00'],
  ['Open', '1.31199'],
  ['High', '1.31471'],
  ['Low', '1.31087'],
  ['Close', '1.31287'],
  ['Volume', '296160'],
  ['Tick Volume', '0'],
  ['Spread', '3'],
];

const App = () => (
  <>
    <GlobalStyle />
    <Desktop>
      <LeftEdge />
      <Windows>
        <Frame $back>
          <WindowTop title="SwingBreakout" chartType="line" dim />
          <Workspace $covered>
            <SideColumn>
              <DataPane symbol="USDJPYMT5,H4" rows={backRows} />
            </SideColumn>
            <ChartColumn>
              <ChartFrame>
                <OptimisationChart />
              </ChartFrame>
            </ChartColumn>
          </Workspace>
        </Frame>
        <Frame>
          <WindowTop title="USDCADMT5,H4" chartType="candles" />
          <Workspace>
            <SideColumn>
              <DataPane symbol="USDCADMT5,H4" rows={frontRows} />
              <MarketWatch />
            </SideColumn>
            <ChartColumn>
              <ChartFrame $dark>
                <PriceChart />
              </ChartFrame>
              <ChartTabs>
                <ChartTab>USDJPYMT5,H4</ChartTab>
                <ChartTab $active>USDCADMT5,H4</ChartTab>
                <ChartTab>SwingBreakout</ChartTab>
                <TabArrows>
                  <svg width="4" height="7" fill="#808080"><path d="M4 0v7L0 3.500z" /></svg>
                  <svg width="4" height="7" fill="#808080"><path d="M0 0v7l4-3.500z" /></svg>
                </TabArrows>
              </ChartTabs>
            </ChartColumn>
          </Workspace>
          <TesterReport />
        </Frame>
      </Windows>
      <RightEdge />
    </Desktop>
  </>
);

export default App;
